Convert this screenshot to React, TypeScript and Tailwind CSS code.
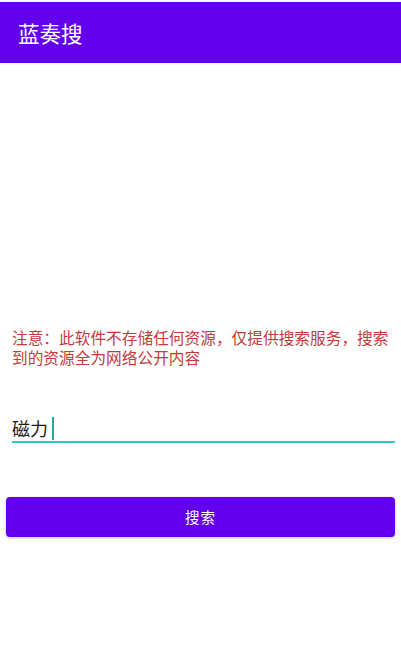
import React from "react";

export default function App() {
  return (
    <div
      className="w-[401px] h-[651px] bg-white flex flex-col pt-[2px]"
      style={{ fontFamily: '"Noto Sans CJK SC", "Noto Sans", sans-serif' }}
    >
      <div className="h-[61px] bg-[#6200EE] flex items-center pl-[18px]">
        <span className="text-white text-[21.5px] leading-none">蓝奏搜</span>
      </div>

      <div className="mt-[265px] pl-3 pr-[10px] text-[15.7px] leading-[20px] text-[#c23a3a]">
        注意：此软件不存储任何资源，仅提供搜索服务，搜索到的资源全为网络公开内容
      </div>

      <div className="mt-[47px] ml-3 mr-[6px] border-b-2 border-[#2ECBBE] h-[28px] flex items-center">
        <span className="text-[18px] leading-[26px] text-[#1a1a1a]">磁力</span>
        <span className="ml-[4px] w-[2px] h-[23px] bg-[#1fae9f]" />
      </div>

      <div className="mt-[54px] mx-[6px] h-[40px] bg-[#6200EE] rounded-[4px] shadow-[0_1px_3px_rgba(0,0,0,0.25)] flex items-center justify-center">
        <span className="text-white text-[14.5px] tracking-[1px]">搜索</span>
      </div>
    </div>
  );
}
